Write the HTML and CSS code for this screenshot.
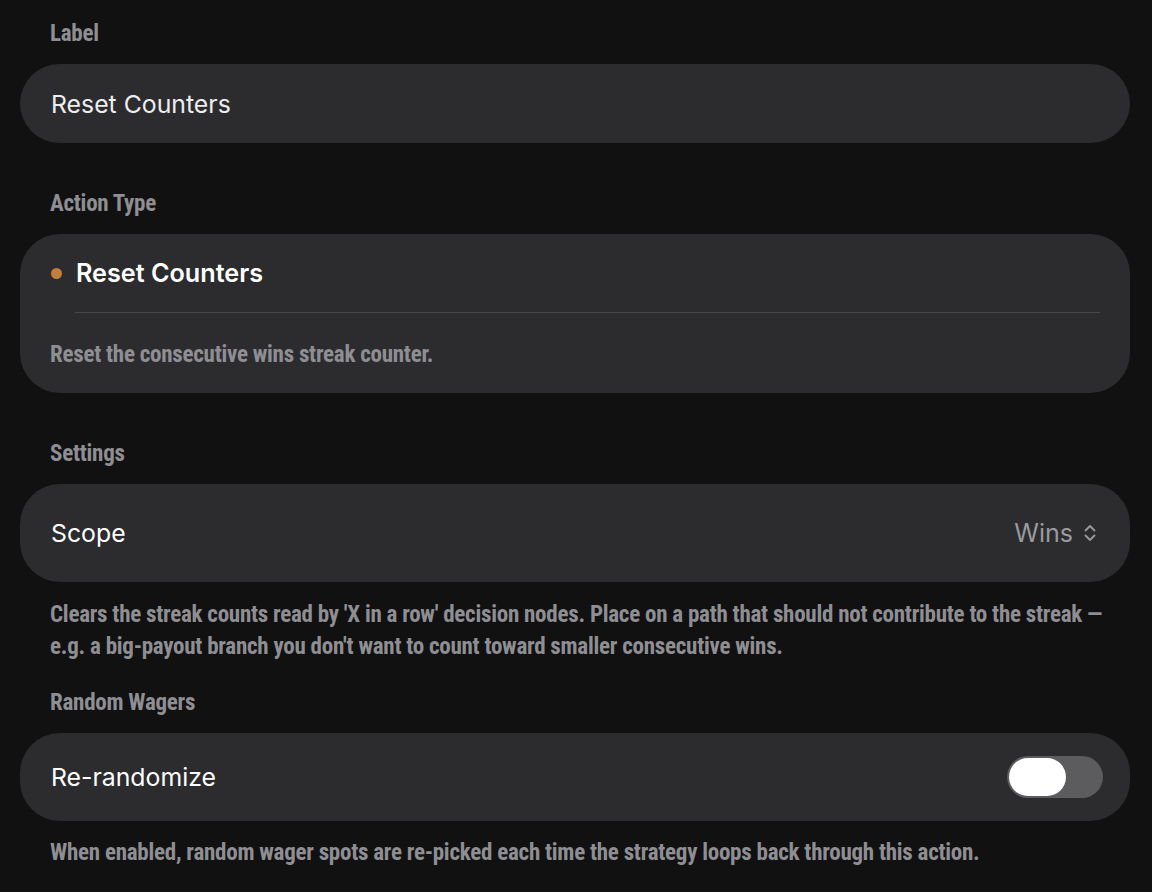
FILE: index.html
```html
<!DOCTYPE html>
<html>
<head>
<meta charset="utf-8">
<link rel="stylesheet" href="styles.css">
</head>
<body>
<div class="page">
  <div class="section-label">Label</div>
  <div class="card field"><span class="field-text">Reset Counters</span></div>

  <div class="section-label">Action Type</div>
  <div class="card action">
    <div class="action-head"><span class="dot"></span><span class="action-title">Reset Counters</span></div>
    <div class="divider"></div>
    <div class="action-desc">Reset the consecutive wins streak counter.</div>
  </div>

  <div class="section-label">Settings</div>
  <div class="card row scope">
    <span class="row-text">Scope</span>
    <span class="picker">Wins
      <svg class="chev" width="14" height="20" viewBox="0 0 14 20"><path d="M2.5 7.5 L7 3 L11.5 7.5 M2.5 12.5 L7 17 L11.5 12.5" fill="none" stroke="currentColor" stroke-width="1.8" stroke-linecap="round" stroke-linejoin="round"/></svg>
    </span>
  </div>
  <div class="note two">Clears the streak counts read by 'X in a row' decision nodes. Place on a path that should not contribute to the streak — e.g. a big-payout branch you don't want to count toward smaller consecutive wins.</div>

  <div class="section-label">Random Wagers</div>
  <div class="card row rerand">
    <span class="row-text">Re-randomize</span>
    <span class="toggle"><span class="knob"></span></span>
  </div>
  <div class="note">When enabled, random wager spots are re-picked each time the strategy loops back through this action.</div>
</div>
</body>
</html>
```
FILE: styles.css
```css
html, body {
  margin: 0;
  padding: 0;
  background: #111111;
}
body {
  font-family: Inter, "Noto Sans", sans-serif;
  color: #f2f2f4;
}
.page {
  display: flex;
  flex-direction: column;
  padding: 19px 22px 0 20px;
}
.section-label,
.action-desc,
.note {
  font-family: "Roboto Condensed", "Open Sans Condensed", sans-serif;
  font-weight: bold;
  font-size: 23px;
  letter-spacing: -0.25px;
  color: #8e8e93;
}
.section-label {
  line-height: 30px;
  padding-left: 30px;
  margin-bottom: 15px;
}
.card {
  background: #2c2c2e;
  border-radius: 40px;
}
.field {
  height: 79px;
  display: flex;
  align-items: center;
  padding-left: 31px;
  margin-bottom: 46px;
}
.field-text {
  font-size: 24.8px;
  color: #ededf0;
}
.action {
  height: 159px;
  box-sizing: border-box;
  padding: 22px 30px 0 30px;
  margin-bottom: 46px;
}
.action-head {
  display: flex;
  align-items: center;
  height: 34px;
}
.dot {
  width: 11px;
  height: 11px;
  border-radius: 50%;
  background: #c17f3b;
  margin-left: 1px;
  margin-right: 14px;
}
.action-title {
  font-size: 25.2px;
  font-weight: 600;
  color: #ffffff;
}
.divider {
  height: 1px;
  background: #48484b;
  margin: 22px 0 0 25px;
}
.action-desc {
  margin-top: 27px;
  line-height: 30px;
}
.row {
  display: flex;
  align-items: center;
  justify-content: space-between;
  padding: 0 33px 0 31px;
}
.scope {
  height: 98px;
  margin-bottom: 17px;
}
.row-text {
  font-size: 24.8px;
  color: #ffffff;
}
.picker {
  display: flex;
  align-items: center;
  gap: 10px;
  font-size: 25px;
  color: #9a9a9e;
}
.chev {
  display: block;
}
.note {
  line-height: 32px;
  padding-left: 30px;
  padding-right: 20px;
}
.note.two {
  margin-bottom: 25px;
}
.rerand {
  height: 88px;
  margin-bottom: 16px;
  padding-right: 27px;
}
.toggle {
  width: 96px;
  height: 42px;
  border-radius: 21px;
  background: #5c5c5f;
  display: flex;
  align-items: center;
  padding: 0 2px;
  box-sizing: border-box;
}
.knob {
  width: 57px;
  height: 38px;
  border-radius: 19px;
  background: #ffffff;
}
```
